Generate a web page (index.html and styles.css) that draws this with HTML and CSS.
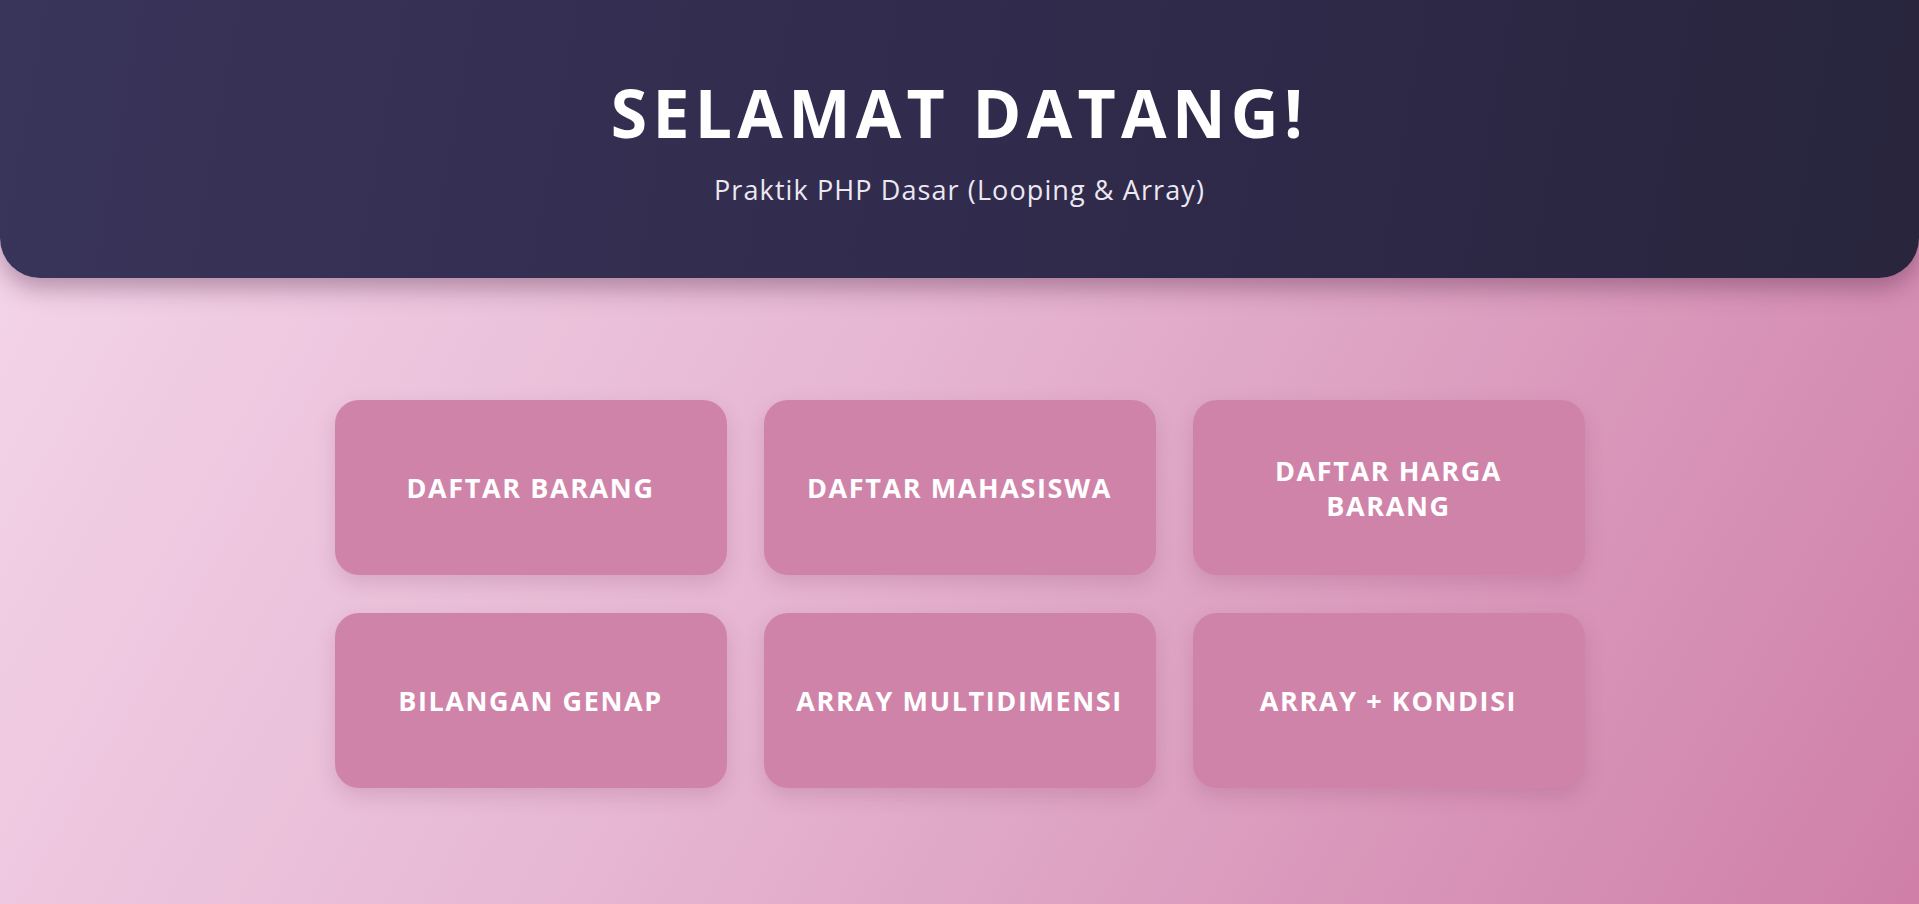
FILE: index.html
```html
<!DOCTYPE html>
<html lang="id">
<head>
<meta charset="utf-8">
<title>Praktik PHP Dasar</title>
<link rel="stylesheet" href="styles.css">
</head>
<body>
  <header class="hero">
    <h1 class="hero-title">SELAMAT DATANG!</h1>
    <p class="hero-sub">Praktik PHP Dasar (Looping &amp; Array)</p>
  </header>
  <main class="menu">
    <a class="card" href="#">DAFTAR BARANG</a>
    <a class="card" href="#">DAFTAR MAHASISWA</a>
    <a class="card" href="#">DAFTAR HARGA<br>BARANG</a>
    <a class="card" href="#">BILANGAN GENAP</a>
    <a class="card" href="#">ARRAY MULTIDIMENSI</a>
    <a class="card" href="#">ARRAY + KONDISI</a>
  </main>
</body>
</html>
```

FILE: styles.css
```css
* { box-sizing: border-box; }

html, body {
  margin: 0;
  padding: 0;
  min-height: 100%;
}

body {
  min-height: 904px;
  font-family: "Open Sans", "Liberation Sans", sans-serif;
  background: linear-gradient(120deg, #f5d8ec 0%, #e6b6d2 45%, #cf7fa8 100%);
  overflow: hidden;
}

.hero {
  height: 278px;
  padding-top: 76px;
  text-align: center;
  color: #fff;
  background: linear-gradient(100deg, #393459 0%, #312b4d 50%, #28253d 100%);
  border-radius: 0 0 40px 40px;
  box-shadow: 0 10px 25px rgba(60, 20, 50, 0.35);
}

.hero-title {
  margin: 0;
  font-size: 66px;
  font-weight: 700;
  letter-spacing: 5.3px;
  line-height: 1.1;
}

.hero-sub {
  margin: 22px 0 0;
  font-size: 27px;
  font-weight: 400;
  color: #ece8f2;
  letter-spacing: 1.1px;
}

.menu {
  width: 1250px;
  margin: 122px auto 0;
  display: grid;
  grid-template-columns: repeat(3, 1fr);
  column-gap: 37px;
  row-gap: 38px;
}

.card {
  height: 175px;
  display: flex;
  align-items: center;
  justify-content: center;
  text-align: center;
  padding: 0 16px;
  background: #d083a9;
  border-radius: 24px;
  box-shadow: 0 8px 20px rgba(120, 50, 90, 0.18);
  color: #fff;
  text-decoration: none;
  font-weight: 700;
  font-size: 27px;
  line-height: 35px;
  letter-spacing: 1.6px;
}
```
